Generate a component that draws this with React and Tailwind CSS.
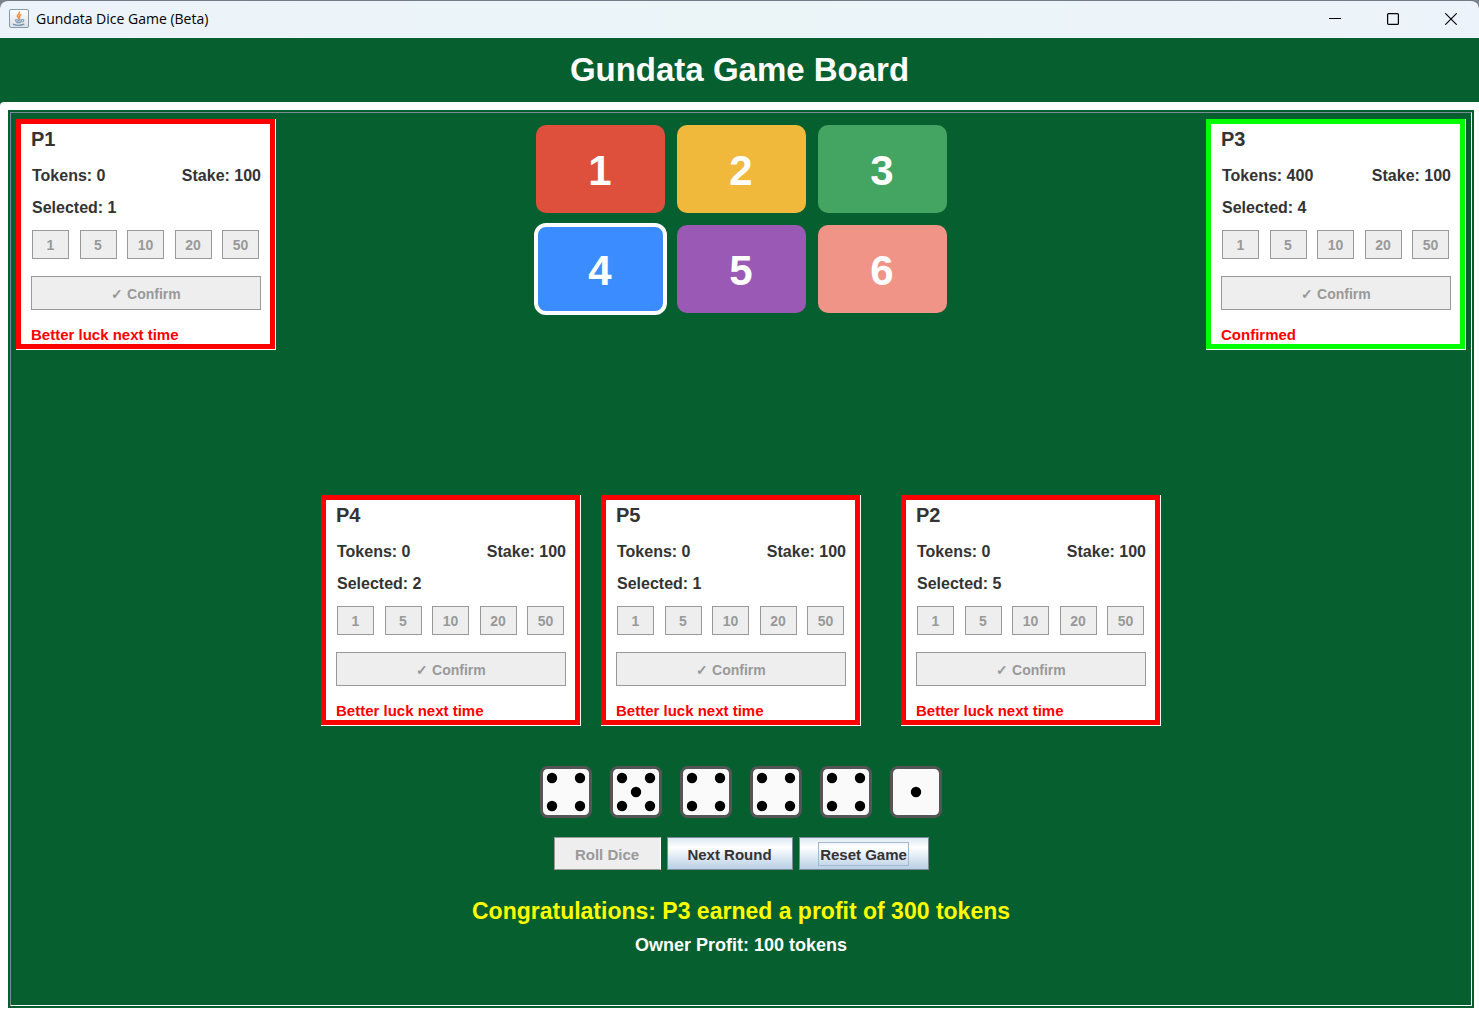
const TILES = [
  { n: 1, color: 'bg-[#de503c]' },
  { n: 2, color: 'bg-[#f0b93c]' },
  { n: 3, color: 'bg-[#44a462]' },
  { n: 4, color: 'bg-[#3a8cff]', active: true },
  { n: 5, color: 'bg-[#9b59b6]' },
  { n: 6, color: 'bg-[#f19488]' },
];

const CHIPS = [1, 5, 10, 20, 50];

const PIPS = {
  1: [[26, 26]],
  4: [[12, 12], [40, 12], [12, 40], [40, 40]],
  5: [[12, 12], [40, 12], [26, 26], [12, 40], [40, 40]],
};

const DICE = [4, 5, 4, 4, 4, 1];

function JavaIcon() {
  return (
    <svg width="20" height="20" viewBox="0 0 20 20" aria-hidden="true">
      <defs>
        <linearGradient id="tile" x1="0" y1="0" x2="0" y2="1">
          <stop offset="0" stopColor="#ffffff" />
          <stop offset="1" stopColor="#dcdfe3" />
        </linearGradient>
      </defs>
      <rect x="0.5" y="0.5" width="19" height="18" rx="1.5" fill="url(#tile)" stroke="#8399ad" />
      <path d="M10.4 3c.6 1.800-2.600 2.600-2 4.400.2.700 1 1.100 1.100 1.700M11.800 5.800c-1.400.6-2 1.300-1.200 2.300.3.500.1.800-.2 1.100" fill="none" stroke="#f0924c" strokeWidth="1.600" strokeLinecap="round" />
      <path d="M6 10.300h7.200c0 2-.8 3.400-2 4H8c-1.200-.6-2-2-2-4z" fill="#7d9cb8" />
      <path d="M7 11.800c1.800.5 3.600.5 5.200 0" fill="none" stroke="#dfe7ee" strokeWidth="0.800" />
      <path d="M13.200 10.600c2.400-.3 2 2-.6 2.400" fill="none" stroke="#7d9cb8" strokeWidth="1.100" />
      <path d="M4.500 15.300c2.800 1.200 7.700 1.100 10.300-.1" fill="none" stroke="#6f91b0" strokeWidth="1.400" strokeLinecap="round" />
    </svg>
  );
}

function WindowButton({ label, children }) {
  return (
    <button aria-label={label} className="flex h-9 w-14 items-center justify-center">
      <svg width="12" height="12" viewBox="0 0 12 12" fill="none" stroke="#000">
        {children}
      </svg>
    </button>
  );
}

function TitleBar() {
  return (
    <div className="bg-[#7a8490] font-normal">
      <div className="flex h-[38px] items-center rounded-t-lg border-t border-[#737b86] bg-linear-to-r from-[#ecf3fa] via-[#ebf5f8] to-[#ecf3fa] pb-px pl-[9px]">
        <JavaIcon />
        <span className="ml-[7px] flex-1 font-['Open_Sans','Noto_Sans',sans-serif] text-[14px] leading-5 text-black">
          Gundata Dice Game (Beta)
        </span>
        <div className="flex gap-0.5">
          <WindowButton label="Minimize">
            <path d="M0 5.500h12" />
          </WindowButton>
          <WindowButton label="Maximize">
            <rect x="0.6" y="0.6" width="10.800" height="10.800" rx="1" strokeWidth="1.200" />
          </WindowButton>
          <WindowButton label="Close">
            <path d="M0.300 0.300l11.400 11.400M11.700 0.300L0.300 11.700" strokeWidth="1.100" />
          </WindowButton>
        </div>
      </div>
    </div>
  );
}

function PlayerCard({ name, tokens, selected, message, winner }) {
  return (
    <section aria-label={name} className="w-[260px] shrink-0 bg-white pr-px pb-px text-[#333333]">
      <div className={`border-[5px] ${winner ? 'border-[#00ff00]' : 'border-[#ff0000]'} pr-[9px] pl-[10px]`}>
        <h2 className="pt-[3px] text-[20px] leading-6">{name}</h2>
        <div className="mt-[15px] flex justify-between pl-px text-[16px] leading-5">
          <span>Tokens: {tokens}</span>
          <span>Stake: 100</span>
        </div>
        <div className="mt-3 pl-px text-[16px] leading-5">Selected: {selected}</div>
        <div className="mt-3 flex justify-between pr-0.5 pl-px">
          {CHIPS.map((c) => (
            <button key={c} disabled className="h-[29px] w-[37px] border border-[#999999] bg-[#eeeeee] pt-px text-[14px] leading-5 text-[#999999]">
              {c}
            </button>
          ))}
        </div>
        <button disabled className="mt-[17px] h-[34px] w-full border border-[#999999] bg-[#eeeeee] pt-0.5 text-[14px] leading-5 text-[#999999]">
          ✓ Confirm
        </button>
        <p className="mt-[15px] text-[15px] leading-[19px] text-[#ff0000]">{message}</p>
      </div>
    </section>
  );
}

function Die({ value }) {
  return (
    <svg width="52" height="52" viewBox="0 0 52 52" role="img" aria-label={`Die showing ${value}`}>
      <rect x="1.500" y="1.500" width="49" height="49" rx="6" fill="#fafafa" stroke="#555555" strokeWidth="3" />
      {PIPS[value].map(([x, y]) => (
        <circle key={`${x}-${y}`} cx={x} cy={y} r="5.200" fill="#000" />
      ))}
    </svg>
  );
}

export default function App() {
  return (
    <div className="flex min-h-screen flex-col bg-[#065f2e] font-['Liberation_Sans',Arial,sans-serif] font-bold">
      <TitleBar />
      <header className="flex h-16 items-center justify-center">
        <h1 className="text-[33px] leading-10 text-white">Gundata Game Board</h1>
      </header>
      <main className="flex flex-1 flex-col rounded-tl-[4px] bg-white pt-2 pr-[5px] pb-[5px] pl-2">
        <div className="flex flex-1 flex-col bg-[#065f2e] p-0.5">
          <div className="flex flex-1 flex-col border border-t-[#7a8a99] border-r-white border-b-white border-l-[#7a8a99] px-[5px] pt-[6px]">
            <div className="flex items-start justify-between">
              <PlayerCard name="P1" tokens={0} selected={1} message="Better luck next time" />
              <div className="mt-[6px] grid grid-cols-3 gap-3">
                {TILES.map((t) => (
                  <button
                    key={t.n}
                    className={`h-[88px] w-[129px] rounded-[10px] pt-1 text-[42px] leading-none text-white ${t.color} ${t.active ? 'outline-4 -outline-offset-2 outline-white' : ''}`}
                  >
                    {t.n}
                  </button>
                ))}
              </div>
              <PlayerCard name="P3" tokens={400} selected={4} message="Confirmed" winner />
            </div>
            <div className="mt-[145px] flex justify-center">
              <PlayerCard name="P4" tokens={0} selected={2} message="Better luck next time" />
              <div className="mr-10 ml-5">
                <PlayerCard name="P5" tokens={0} selected={1} message="Better luck next time" />
              </div>
              <PlayerCard name="P2" tokens={0} selected={5} message="Better luck next time" />
            </div>
            <div className="mt-10 flex justify-center gap-[18px]">
              {DICE.map((d, i) => (
                <Die key={i} value={d} />
              ))}
            </div>
            <div className="mt-[19px] flex justify-center gap-[6px] text-[15px] leading-5 text-[#333333]">
              <button disabled className="h-[33px] w-[107px] border border-[#999999] border-r-white bg-[#eeeeee] pt-0.5 text-[#999999]">
                Roll Dice
              </button>
              <button className="h-[33px] w-[126px] border border-[#7a8a99] bg-linear-to-b from-[#dde8f3] via-white via-30% to-[#b8cfe5] pt-0.5">
                Next Round
              </button>
              <button className="flex h-[33px] w-[130px] items-center justify-center border border-[#7a8a99] bg-linear-to-b from-[#dde8f3] via-white via-30% to-[#b8cfe5]">
                <span className="border border-[#a3b8cc] px-px pt-0.5">Reset Game</span>
              </button>
            </div>
            <p className="mt-[27px] text-center text-[23px] leading-7 text-[#ffff00]">
              Congratulations: P3 earned a profit of 300 tokens
            </p>
            <p className="mt-2 text-center text-[18px] leading-6 text-white">Owner Profit: 100 tokens</p>
          </div>
        </div>
      </main>
    </div>
  );
}
